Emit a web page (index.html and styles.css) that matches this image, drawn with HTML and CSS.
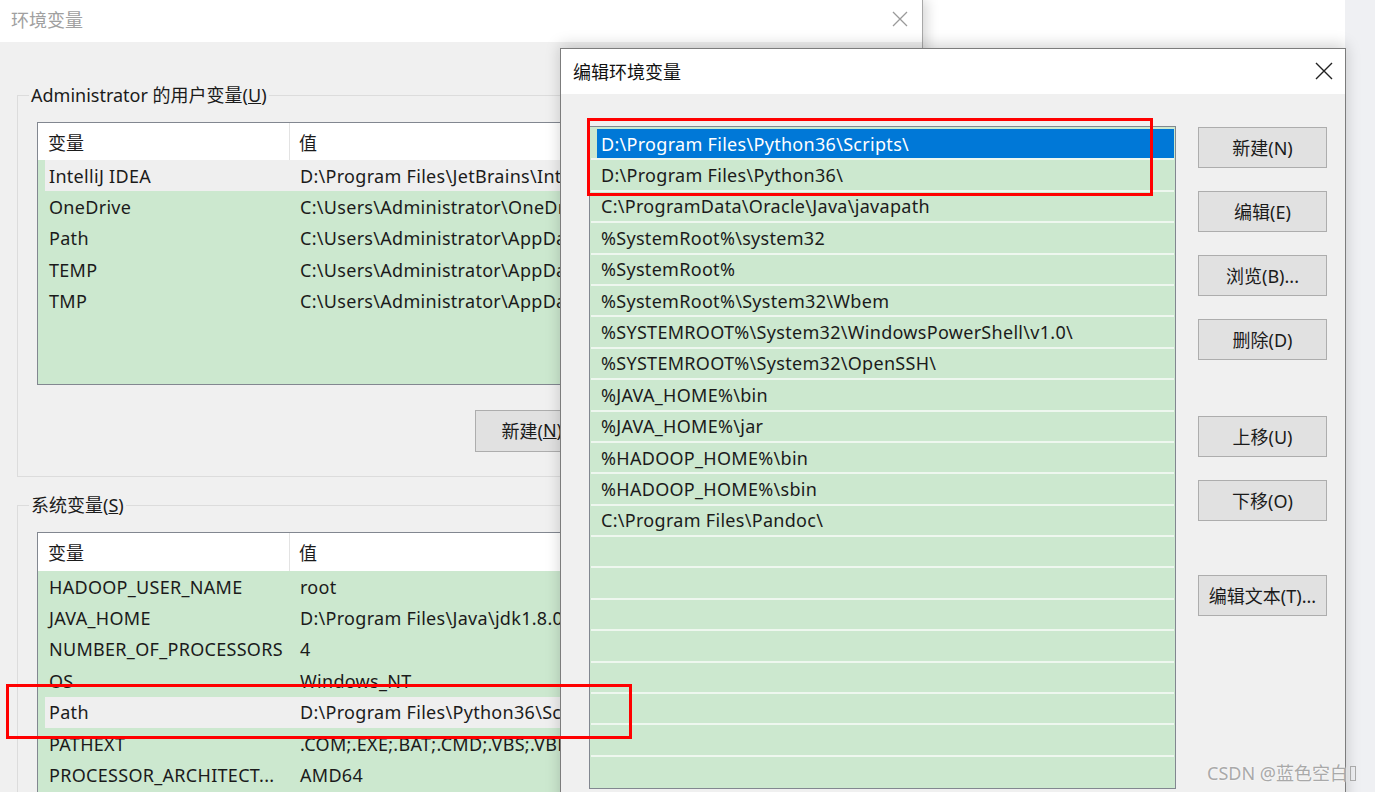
FILE: index.html
```html
<!DOCTYPE html>
<html lang="zh-CN">
<head>
<meta charset="utf-8">
<title>环境变量</title>
<link rel="stylesheet" href="styles.css">
</head>
<body>
<div class="desktop">
  <div class="back-win"></div>

  <div class="win env">
    <div class="titlebar env-title">
      <span>环境变量</span>
      <svg class="close" width="16" height="16" viewBox="0 0 16 16"><path d="M1 1L15 15M15 1L1 15" stroke="#9a9a9a" stroke-width="1.3" fill="none"/></svg>
    </div>
    <div class="env-body">
      <fieldset class="group">
        <legend>Administrator 的用户变量(<u>U</u>)</legend>
        <div class="vtable">
          <div class="vhead"><div class="c1">变量</div><div class="c2">值</div></div>
          <div class="vrow sel"><div class="c1">IntelliJ IDEA</div><div class="c2">D:\Program Files\JetBrains\IntelliJ IDEA 2020.1\bin;</div></div>
          <div class="vrow"><div class="c1">OneDrive</div><div class="c2">C:\Users\Administrator\OneDrive</div></div>
          <div class="vrow"><div class="c1">Path</div><div class="c2">C:\Users\Administrator\AppData\Local\Microsoft\WindowsApps;</div></div>
          <div class="vrow"><div class="c1">TEMP</div><div class="c2">C:\Users\Administrator\AppData\Local\Temp</div></div>
          <div class="vrow"><div class="c1">TMP</div><div class="c2">C:\Users\Administrator\AppData\Local\Temp</div></div>
        </div>
        <div class="btn-row">
          <button class="btn">新建(<u>N</u>)...</button>
          <button class="btn">编辑(<u>E</u>)...</button>
          <button class="btn">删除(<u>D</u>)</button>
        </div>
      </fieldset>
      <fieldset class="group sys">
        <legend>系统变量(<u>S</u>)</legend>
        <div class="vtable tall">
          <div class="vhead"><div class="c1">变量</div><div class="c2">值</div></div>
          <div class="vrow"><div class="c1">HADOOP_USER_NAME</div><div class="c2">root</div></div>
          <div class="vrow"><div class="c1">JAVA_HOME</div><div class="c2">D:\Program Files\Java\jdk1.8.0_181</div></div>
          <div class="vrow"><div class="c1">NUMBER_OF_PROCESSORS</div><div class="c2">4</div></div>
          <div class="vrow"><div class="c1">OS</div><div class="c2">Windows_NT</div></div>
          <div class="vrow sel"><div class="c1">Path</div><div class="c2">D:\Program Files\Python36\Scripts\;D:\Program Files\Python36\;</div></div>
          <div class="vrow"><div class="c1">PATHEXT</div><div class="c2">.COM;.EXE;.BAT;.CMD;.VBS;.VBE;.JS;.JSE;.WSF;.WSH;.MSC</div></div>
          <div class="vrow"><div class="c1">PROCESSOR_ARCHITECT...</div><div class="c2">AMD64</div></div>
        </div>
      </fieldset>
    </div>
  </div>

  <div class="win edit">
    <div class="titlebar edit-title">
      <span>编辑环境变量</span>
      <svg class="close" width="18" height="18" viewBox="0 0 18 18"><path d="M1 1L17 17M17 1L1 17" stroke="#222" stroke-width="1.4" fill="none"/></svg>
    </div>
    <div class="edit-body">
      <div class="plist">
        <div class="prow sel"><div class="sel-box">D:\Program Files\Python36\Scripts\</div></div>
        <div class="prow">D:\Program Files\Python36\</div>
        <div class="prow">C:\ProgramData\Oracle\Java\javapath</div>
        <div class="prow">%SystemRoot%\system32</div>
        <div class="prow">%SystemRoot%</div>
        <div class="prow">%SystemRoot%\System32\Wbem</div>
        <div class="prow">%SYSTEMROOT%\System32\WindowsPowerShell\v1.0\</div>
        <div class="prow">%SYSTEMROOT%\System32\OpenSSH\</div>
        <div class="prow">%JAVA_HOME%\bin</div>
        <div class="prow">%JAVA_HOME%\jar</div>
        <div class="prow">%HADOOP_HOME%\bin</div>
        <div class="prow">%HADOOP_HOME%\sbin</div>
        <div class="prow">C:\Program Files\Pandoc\</div>
        <div class="prow"></div>
        <div class="prow"></div>
        <div class="prow"></div>
        <div class="prow"></div>
        <div class="prow"></div>
        <div class="prow"></div>
        <div class="prow"></div>
        <div class="prow last"></div>
      </div>
      <div class="btncol">
        <button class="btn wide">新建(N)</button>
        <button class="btn wide">编辑(E)</button>
        <button class="btn wide">浏览(B)...</button>
        <button class="btn wide">删除(D)</button>
        <button class="btn wide gap1">上移(U)</button>
        <button class="btn wide">下移(O)</button>
        <button class="btn wide gap2">编辑文本(T)...</button>
      </div>
    </div>
  </div>

  <div class="mark mark1"></div>
  <div class="mark mark2"></div>
  <div class="watermark">CSDN @蓝色空白<span class="tofu"></span></div>
</div>
</body>
</html>
```
FILE: styles.css
```css
* { box-sizing: border-box; }

body {
  margin: 0;
  width: 1375px;
  height: 792px;
  overflow: hidden;
  background: #eff0f3;
  font-family: "Noto Sans", "Noto Sans CJK SC", sans-serif;
  font-size: 18px;
  color: #1b1b1b;
}

.desktop {
  position: relative;
  width: 1375px;
  height: 792px;
  overflow: hidden;
}

.back-win {
  position: absolute;
  left: 922px;
  top: 0;
  width: 423px;
  height: 60px;
  background: #fff;
}

.win {
  position: absolute;
  background: #f0f0f0;
}

.env {
  left: 0;
  top: 0;
  width: 923px;
  height: 830px;
  border-right: 1px solid #a8a8a8;
  box-shadow: 4px 0 12px rgba(0, 0, 0, 0.16);
}

.titlebar {
  display: flex;
  align-items: center;
  justify-content: space-between;
  background: #fff;
  white-space: nowrap;
}

.env-title {
  height: 42px;
  padding: 0 14px 5px 11px;
  color: #a0a0a0;
}

.env-body {
  padding: 0 17px;
}

.group {
  margin: 41px 0 0;
  padding: 15px 19px 24px;
  border: 1px solid #dcdcdc;
  min-width: 0;
}

.group.sys {
  margin-top: 16px;
}

.group legend {
  line-height: 24px;
  padding: 0 2px;
  margin-left: -8px;
  white-space: nowrap;
}

.vtable {
  height: 263px;
  border: 1px solid #828790;
  background: #cce8cf;
  overflow: hidden;
  white-space: nowrap;
  letter-spacing: 0.3px;
}

.vtable.tall {
  height: 400px;
}

.vhead {
  display: flex;
  height: 37px;
  align-items: center;
  background: #fff;
  letter-spacing: 0;
}

.tall .vhead {
  height: 38px;
}

.vhead .c1 {
  width: 252px;
  height: 100%;
  display: flex;
  align-items: center;
  padding-left: 10px;
  border-right: 1px solid #e3e3e3;
}

.vhead .c2 {
  padding-left: 9px;
}

.vrow {
  display: flex;
  align-items: center;
  height: 31.4px;
  margin-left: 7px;
}

.vrow .c1 {
  width: 245px;
  padding-left: 4px;
  overflow: hidden;
}

.vrow .c2 {
  padding-left: 10px;
}

.vrow.sel {
  background: #efefef;
}

.btn-row {
  display: flex;
  justify-content: flex-end;
  gap: 13px;
  margin-top: 25px;
}

.btn {
  width: 128px;
  height: 42px;
  border: 1px solid #adadad;
  background: #e1e1e1;
  font-family: "Noto Sans", "Noto Sans CJK SC", sans-serif;
  font-size: 18px;
  color: #1b1b1b;
  padding: 0 0 2px;
  white-space: nowrap;
  display: flex;
  align-items: center;
  justify-content: center;
}

.edit {
  left: 560px;
  top: 48px;
  width: 786px;
  height: 780px;
  border: 1px solid #7c7c7c;
  box-shadow: 0 -3px 14px rgba(0, 0, 0, 0.18);
}

.edit-title {
  height: 45px;
  padding: 0 12px 2px 12px;
  color: #111;
}

.edit-body {
  display: flex;
  align-items: flex-start;
  gap: 22px;
  padding: 32px 0 0 28px;
}

.plist {
  width: 587px;
  height: 663px;
  border: 1px solid #828790;
  background: #cce8cf;
  padding: 2px 1px 0;
  overflow: hidden;
  letter-spacing: 0.3px;
}

.prow {
  height: 31.4px;
  border-bottom: 2px solid #eef7ef;
  display: flex;
  align-items: center;
  padding-left: 10px;
  white-space: nowrap;
}

.prow.last {
  border-bottom: none;
}

.prow.sel {
  padding-left: 6px;
}

.sel-box {
  flex: 1;
  height: 100%;
  display: flex;
  align-items: center;
  padding-left: 4px;
  background: #0078d7;
  color: #fff;
}

.btncol {
  display: flex;
  flex-direction: column;
  gap: 23px;
  padding-top: 1px;
}

.btn.wide {
  width: 129px;
  height: 41px;
}

.btn.gap1 {
  margin-top: 33px;
}

.btn.gap2 {
  margin-top: 31px;
}

.mark {
  position: absolute;
  border: 3px solid #ff0000;
}

.mark1 {
  left: 587px;
  top: 118px;
  width: 566px;
  height: 78px;
}

.mark2 {
  left: 6px;
  top: 684px;
  width: 626px;
  height: 55px;
}

.watermark {
  position: absolute;
  left: 1207px;
  top: 760px;
  font-size: 18px;
  line-height: 26px;
  color: #a9a9a9;
  text-shadow: 0 0 2px #fff;
  white-space: nowrap;
  display: flex;
  align-items: center;
}

.tofu {
  display: inline-block;
  width: 6px;
  height: 15px;
  margin-left: 2px;
  border: 1px solid #a9a9a9;
}
```
